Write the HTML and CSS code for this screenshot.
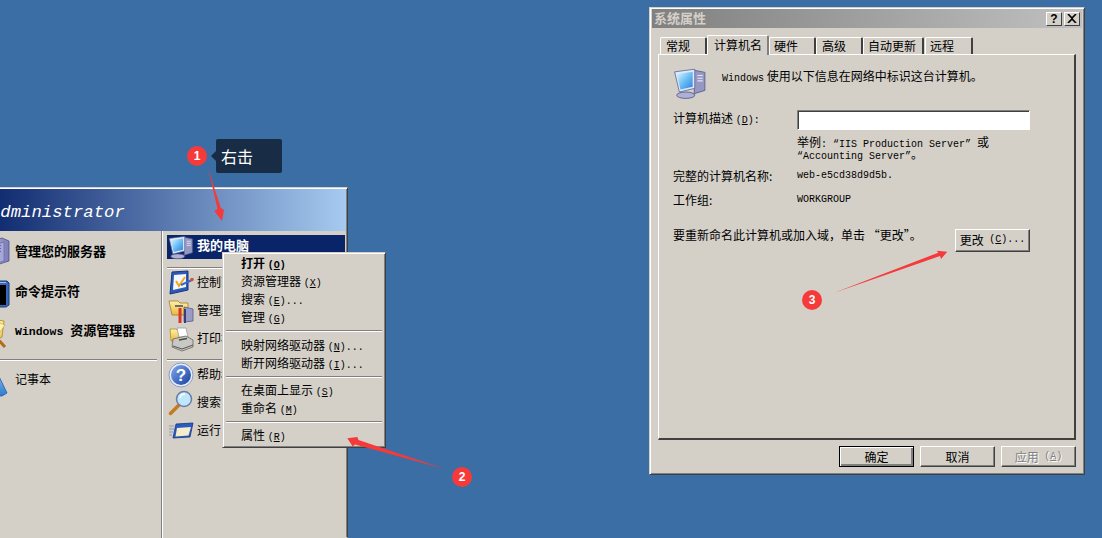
FILE: index.html
```html
<!DOCTYPE html>
<html lang="zh">
<head>
<meta charset="utf-8">
<title>系统属性</title>
<link rel="stylesheet" href="styles.css">
</head>
<body>
<svg class="defs" aria-hidden="true">
  <defs>
    <linearGradient id="scr" x1="0" y1="0" x2="1" y2="1"><stop offset="0" stop-color="#e6f6ff"/><stop offset=".5" stop-color="#6cc0f5"/><stop offset="1" stop-color="#2f7fdc"/></linearGradient>
    <linearGradient id="blue" x1="0" y1="0" x2="1" y2="1"><stop offset="0" stop-color="#7fa8ee"/><stop offset="1" stop-color="#173f9e"/></linearGradient>
    <linearGradient id="fold" x1="0" y1="0" x2="0" y2="1"><stop offset="0" stop-color="#fff2a8"/><stop offset="1" stop-color="#e8b83c"/></linearGradient>
    <linearGradient id="srv" x1="0" y1="0" x2="1" y2="0"><stop offset="0" stop-color="#c8c8e6"/><stop offset="1" stop-color="#7c7cb8"/></linearGradient>
    <linearGradient id="note" x1="0" y1="0" x2="0" y2="1"><stop offset="0" stop-color="#a4d0f4"/><stop offset="1" stop-color="#2e7ad0"/></linearGradient>
    <symbol id="i-pc" viewBox="0 0 32 32">
      <path d="M20 4 30 6V23L20 26Z" fill="#9698c4" stroke="#56588e" stroke-width=".8"/>
      <path d="M23 9h5M23 11.500h5M23 14h5" stroke="#e4e4f4" stroke-width="1"/>
      <ellipse cx="12" cy="27.500" rx="8.500" ry="3" fill="#b0b0d4" stroke="#55588c" stroke-width=".8"/>
      <path d="M1.500 5.500 20.500 3V21L6 24.500Z" fill="#e4e8f6" stroke="#5a6a9e" stroke-width=".8"/>
      <path d="M3.500 7.500 18.500 5.500V19.500L7 22Z" fill="url(#scr)"/>
    </symbol>
    <symbol id="i-ctl" viewBox="0 0 26 26">
      <path d="M4 2 20 1V20L2 24Z" fill="#2c5ab4" stroke="#16357e"/>
      <path d="M6 5 18 4V17L5 20Z" fill="#f4f6fc"/>
      <path d="M8 11 11 16 17 7" fill="none" stroke="#f0a818" stroke-width="2"/>
      <path d="M13 15 24 10" stroke="#3a68c8" stroke-width="2"/>
      <circle cx="24" cy="9.500" r="1.800" fill="#d84c3c"/>
    </symbol>
    <symbol id="i-tool" viewBox="0 0 26 26">
      <path d="M1 3H10L12 5H20V17H4Z" fill="url(#fold)" stroke="#a67c20" stroke-width=".8"/>
      <path d="M16 9 25 11V23L16 24Z" fill="#9a9cc8" stroke="#55588c" stroke-width=".8"/>
      <path d="M12 10V25" stroke="#d8352a" stroke-width="3"/>
      <path d="M7 8 H15" stroke="#6c6c6c" stroke-width="2"/>
      <path d="M17 11V25" stroke="#3c3c70" stroke-width="2"/>
    </symbol>
    <symbol id="i-prn" viewBox="0 0 26 26">
      <path d="M2 3H8L11 6V15H3Z" fill="url(#fold)" stroke="#b08a28" stroke-width=".8"/>
      <path d="M9 2H18L20 11H11Z" fill="#fff" stroke="#9a9ab0" stroke-width=".8"/>
      <path d="M5 13 18 10 25 14V21L14 25 4 21Z" fill="#c8c8c4" stroke="#66665e" stroke-width=".8"/>
      <path d="M5 20 14 23 25 19" fill="none" stroke="#55554e"/>
      <path d="M11 14 19 12.500" stroke="#4a4a44" stroke-width="1.500"/>
    </symbol>
    <symbol id="i-help" viewBox="0 0 26 26">
      <circle cx="13" cy="13" r="12" fill="#e9eefa" stroke="#8a9bc4"/>
      <circle cx="13" cy="13" r="10" fill="url(#blue)"/>
      <text x="13" y="19" class="help-q" text-anchor="middle">?</text>
    </symbol>
    <symbol id="i-find" viewBox="0 0 26 26">
      <path d="M2.500 23.500 10.500 15.500" stroke="#c47c1c" stroke-width="3.500" stroke-linecap="round"/>
      <circle cx="16" cy="9" r="7.500" fill="#bfe6fa" stroke="#6a7ca8" stroke-width="1.500"/>
      <path d="M12 8a5 5 0 0 1 5-4" fill="none" stroke="#fff" stroke-width="1.500"/>
    </symbol>
    <symbol id="i-run" viewBox="0 0 26 26">
      <path d="M8 6 25 5 22 19 5 20Z" fill="#2a5cc0" stroke="#16357e" stroke-width=".8"/>
      <path d="M9 10 23 9 20.500 17.500 7.500 18.500Z" fill="#f4eccc"/>
      <path d="M1 8H6M1 11H6M1 14H5M1 17H4" stroke="#8a98ba" stroke-width="1"/>
    </symbol>
    <symbol id="i-srv" viewBox="0 0 32 32">
      <path d="M3 7 24 1 31 4V24L9 31 3 28Z" fill="url(#srv)" stroke="#50508c" stroke-width=".8"/>
      <path d="M12 9 26 5V24L12 28Z" fill="#a8a8d8" stroke="#60609a" stroke-width=".6"/>
      <path d="M15 10.500 23 8.500M15 13.500 23 11.500M15 16.500 23 14.500" stroke="#5e5e9c"/>
      <circle cx="19" cy="22" r="1.500" fill="#dcdcf4"/>
    </symbol>
    <symbol id="i-cmd" viewBox="0 0 32 32">
      <path d="M2 4H29L31 6V28L28 30H2Z" fill="#3a68b8" stroke="#173a80"/>
      <rect x="3" y="8" width="25" height="20" fill="#000"/>
      <rect x="5" y="20" width="9" height="1.500" fill="#e8e8e8"/>
      <path d="M3 5.500H28" stroke="#9ac0f0"/>
    </symbol>
    <symbol id="i-exp" viewBox="0 0 32 32">
      <path d="M3 8 18 3 26 4 24 20 9 28Z" fill="url(#fold)" stroke="#a88420" stroke-width=".8"/>
      <path d="M7 16 22 6 27 8 17 22Z" fill="#fff3b0" stroke="#c09c30" stroke-width=".6"/>
      <path d="M18 20 27 30" stroke="#b46c18" stroke-width="3"/>
    </symbol>
    <symbol id="i-note" viewBox="0 0 32 32">
      <path d="M10 1 16 1 29 28 24 31 4 30 3 28Z" fill="url(#note)" stroke="#205ca8" stroke-width=".8"/>
      <path d="M12 5 18 20 8 25Z" fill="#c6e2fa"/>
    </symbol>
  </defs>
</svg>

<section class="startmenu">
  <header class="start-head">Administrator</header>
  <div class="start-body">
    <div class="start-left">
      <div class="left-row strong"><svg class="ico-l"><use href="#i-srv"/></svg><span class="row-text">管理您的服务器</span></div>
      <div class="left-row strong"><svg class="ico-l"><use href="#i-cmd"/></svg><span class="row-text">命令提示符</span></div>
      <div class="left-row strong"><svg class="ico-l"><use href="#i-exp"/></svg><span class="row-text"><span class="lat-b">Windows</span> 资源管理器</span></div>
      <div class="sep sep-left"></div>
      <div class="left-row"><svg class="ico-l"><use href="#i-note"/></svg><span class="row-text">记事本</span></div>
    </div>
    <div class="start-right">
      <div class="right-sel"><svg class="ico-r"><use href="#i-pc"/></svg><span class="row-text">我的电脑</span></div>
      <div class="sep sep-r1"></div>
      <div class="right-row"><svg class="ico-r"><use href="#i-ctl"/></svg><span class="row-text">控制面板</span></div>
      <div class="right-row"><svg class="ico-r"><use href="#i-tool"/></svg><span class="row-text">管理工具</span></div>
      <div class="right-row"><svg class="ico-r"><use href="#i-prn"/></svg><span class="row-text">打印机</span></div>
      <div class="sep sep-r2"></div>
      <div class="right-row"><svg class="ico-r"><use href="#i-help"/></svg><span class="row-text">帮助和支持</span></div>
      <div class="right-row"><svg class="ico-r"><use href="#i-find"/></svg><span class="row-text">搜索</span></div>
      <div class="right-row"><svg class="ico-r"><use href="#i-run"/></svg><span class="row-text">运行</span></div>
    </div>
  </div>
</section>

<nav class="ctxmenu">
  <div class="ctx-item ctx-default">打开 <span class="lat">(<u>O</u>)</span></div>
  <div class="ctx-item">资源管理器 <span class="lat">(<u>X</u>)</span></div>
  <div class="ctx-item">搜索 <span class="lat">(<u>E</u>)...</span></div>
  <div class="ctx-item">管理 <span class="lat">(<u>G</u>)</span></div>
  <div class="sep ctx-sep ctx-sep-first"></div>
  <div class="ctx-item">映射网络驱动器 <span class="lat">(<u>N</u>)...</span></div>
  <div class="ctx-item">断开网络驱动器 <span class="lat">(<u>I</u>)...</span></div>
  <div class="sep ctx-sep"></div>
  <div class="ctx-item">在桌面上显示 <span class="lat">(<u>S</u>)</span></div>
  <div class="ctx-item">重命名 <span class="lat">(<u>M</u>)</span></div>
  <div class="sep ctx-sep"></div>
  <div class="ctx-item">属性 <span class="lat">(<u>R</u>)</span></div>
</nav>

<section class="dialog">
  <div class="titlebar">
    <span class="title-text">系统属性</span>
    <span class="title-btns">
      <span class="tbtn tbtn-help">?</span>
      <span class="tbtn"><svg class="tbtn-x" viewBox="0 0 10 9"><path d="M1 0 5 4 9 0M1 9 5 5 9 9" fill="none" stroke="#000" stroke-width="1.600"/></svg></span>
    </span>
  </div>
  <div class="tabs">
    <span class="tab tab-1">常规</span>
    <span class="tab tab-active">计算机名</span>
    <span class="tab tab-2">硬件</span>
    <span class="tab tab-3">高级</span>
    <span class="tab tab-4">自动更新</span>
    <span class="tab tab-5">远程</span>
  </div>
  <div class="panel">
    <div class="intro">
      <svg class="ico-big"><use href="#i-pc"/></svg>
      <span class="intro-text"><span class="lat">Windows</span> 使用以下信息在网络中标识这台计算机。</span>
    </div>
    <div class="form">
      <span class="f-label f-first">计算机描述 <span class="lat">(<u>D</u>):</span></span>
      <span class="f-input"></span>
      <span class="f-hint">
        <span class="hint-line">举例<span class="lat">: “IIS Production Server” </span>或</span>
        <span class="hint-line"><span class="lat">“Accounting Server”</span>。</span>
      </span>
      <span class="f-label">完整的计算机名称:</span>
      <span class="lat">web-e5cd38d9d5b.</span>
      <span class="f-label">工作组:</span>
      <span class="lat">WORKGROUP</span>
    </div>
    <div class="rename">
      <span class="rename-text">要重新命名此计算机或加入域，单击 “更改”。</span>
      <span class="btn btn-change">更改 <span class="lat">(<u>C</u>)...</span></span>
    </div>
  </div>
  <div class="actions">
    <span class="btn btn-default">确定</span>
    <span class="btn">取消</span>
    <span class="btn btn-off">应用 <span class="lat">(<u>A</u>)</span></span>
  </div>
</section>

<svg class="marks" viewBox="0 0 1102 538" aria-hidden="true">
  <path d="M208 168 220.800 208 224 210 222 221 214.300 211 217.500 209Z" fill="#f43a3a"/>
  <path d="M445 469 355 444.500 352.700 446.500 347.300 438.300 357.300 437 358.500 440Z" fill="#f43a3a"/>
  <path d="M834.300 292.700 938.300 252.700 936.700 250.700 947.300 251.700 941 259 940 256Z" fill="#f43a3a"/>
  <circle cx="197" cy="156" r="10" fill="#f63a3a"/>
  <circle cx="462" cy="477" r="10" fill="#f63a3a"/>
  <circle cx="812" cy="300" r="10" fill="#f63a3a"/>
</svg>
<span class="num num-1">1</span>
<span class="num num-2">2</span>
<span class="num num-3">3</span>
<div class="tip">右击</div>
</body>
</html>
```
FILE: styles.css
```css
* { box-sizing: border-box; }
html, body { margin: 0; height: 538px; overflow: hidden; }
body {
  position: relative;
  background: #3b6ea5;
  font: 12px/18px "Noto Sans CJK SC", sans-serif;
  color: #000;
}
.defs { position: absolute; width: 0; height: 0; }
.lat { font-family: "Liberation Mono", monospace; font-size: 10px; }
.lat-b { font-family: "Liberation Mono", monospace; font-size: 11.500px; font-weight: 700; margin-right: 4px; }
.help-q { font: 700 17px "Liberation Sans", sans-serif; fill: #fff; }

.sep { height: 2px; background: #808080; border-bottom: 1px solid #fff; }

/* start menu */
.startmenu {
  position: absolute; left: -20px; top: 187px; width: 368px; height: 351px;
  background: #d4d0c8;
  border: 1px solid #d4d0c8; border-right-color: #404040;
  box-shadow: inset 0 1px #fff, inset -1px 0 #808080;
  padding: 1px 1px 0 0;
}
.start-head {
  height: 42px; padding: 12px 0 0 9px;
  background: linear-gradient(90deg, #0a246a, #a6caf0);
  color: #fff;
  font: italic 17.300px/24px "Liberation Mono", monospace;
}
.start-body { display: flex; height: 308px; }
.start-left {
  width: 182px; padding-top: 2px;
  box-shadow: inset -1px 0 #fff, inset -2px 0 #808080;
}
.left-row { display: flex; align-items: center; height: 40px; gap: 5px; white-space: nowrap; }
.row-text { margin-bottom: 2px; }
.left-row .row-text { margin-bottom: 4px; }
.strong { font-size: 13px; font-weight: 700; }
.ico-l { width: 32px; height: 32px; flex: none; margin-left: -3px; }
.sep-left { margin: 6px 6px 0 0; }
.start-right { flex: 1; padding: 4px 1px 0 4px; min-width: 0; }
.right-sel {
  display: flex; align-items: center; gap: 3px; height: 24px; padding-left: 1px;
  background: #0a246a; color: #fff; font-size: 13px; font-weight: 700;
}
.right-sel .row-text { margin-bottom: 4px; }
.right-row { display: flex; align-items: center; gap: 3px; height: 28px; padding-left: 1px; white-space: nowrap; }
.ico-r { width: 26px; height: 26px; flex: none; }
.sep-r1 { margin-top: 8px; }
.sep-r2 { margin-top: 6px; }

/* context menu */
.ctxmenu {
  position: absolute; left: 222px; top: 252px; width: 164px; height: 196px;
  padding: 1px 3px;
  background: #d4d0c8;
  border: 1px solid #d4d0c8; border-right-color: #404040; border-bottom-color: #404040;
  box-shadow: inset 1px 1px #fff, inset -1px -1px #808080;
}
.ctx-item { height: 18px; padding-left: 15px; white-space: nowrap; }
.ctx-default { font-weight: 700; }
.ctx-sep { margin: 4px 0 3px; }
.ctx-sep-first { margin-bottom: 4px; }

/* dialog */
.dialog {
  position: absolute; left: 649px; top: 7px; width: 436px; height: 468px;
  padding: 1px 2px;
  background: #d4d0c8;
  border: 1px solid #d4d0c8; border-right-color: #404040; border-bottom-color: #404040;
  box-shadow: inset 1px 1px #fff, inset -1px -1px #808080;
  display: flex; flex-direction: column;
}
.titlebar {
  display: flex; align-items: center; justify-content: space-between;
  height: 19px; padding: 0 2px 2px 2px; flex: none;
  background: linear-gradient(90deg, #808080, #c0c0c0);
}
.title-text { color: #d4d0c8; font-size: 13px; font-weight: 700; }
.title-btns { display: flex; gap: 2px; margin-top: 2px; }
.tbtn {
  display: flex; align-items: center; justify-content: center;
  width: 16px; height: 14px;
  background: #d4d0c8;
  border: 1px solid #fff; border-right-color: #404040; border-bottom-color: #404040;
  font: 700 12px/1 "Liberation Sans", sans-serif;
}
.tbtn-x { width: 10px; height: 9px; }
.tabs { display: flex; align-items: flex-end; height: 20px; margin: 7px 0 0 8px; flex: none; position: relative; z-index: 1; }
.tab {
  height: 17px; margin-bottom: 1px; padding: 0 0 0 5px; line-height: 16px;
  background: #d4d0c8;
  border: 1px solid #fff; border-bottom: 0; border-right: 2px solid #404040;
  border-radius: 2px 2px 0 0;
}
.tab-1 { width: 47px; }
.tab-active { width: 62px; height: 20px; margin-bottom: 0; padding-left: 6px; line-height: 18px; border-right-color: #808080; }
.tab-2 { width: 47px; padding-left: 4px; }
.tab-3 { width: 47px; }
.tab-4 { width: 61px; padding-left: 4px; }
.tab-5 { width: 48px; margin-left: 1px; padding-left: 4px; }
.panel {
  flex: none; height: 386px; width: 418px; margin: -1px 0 0 6px; padding: 0 0 0 14px;
  background: #d4d0c8;
  border: 1px solid #fff; border-right: 2px solid #404040; border-bottom: 2px solid #404040;
}
.intro { display: flex; align-items: flex-start; gap: 15px; height: 34px; margin-top: 11px; }
.intro-text { margin-top: 1px; }
.ico-big { width: 34px; height: 34px; flex: none; }
.form {
  display: grid; grid-template-columns: 124px 233px;
  grid-template-rows: 20px 34px 24px 24px;
  align-items: center; margin-top: 10px;
}
.f-first { margin-bottom: 2px; }
.f-input {
  height: 20px; background: #fff;
  border: 1px solid #808080; border-right-color: #fff; border-bottom-color: #fff;
  box-shadow: inset 1px 1px #404040;
}
.f-hint { grid-column: 2; white-space: nowrap; align-self: start; margin-top: 6px; }
.hint-line { display: block; height: 12px; line-height: 12px; }
.rename { display: flex; justify-content: space-between; width: 357px; height: 23px; margin-top: 17px; }
.rename-text { line-height: 11px; }
.btn {
  display: flex; align-items: center; justify-content: center; gap: 3px;
  width: 75px; height: 21px; white-space: pre;
  background: #d4d0c8;
  border: 1px solid #fff; border-right-color: #404040; border-bottom-color: #404040;
  box-shadow: inset -1px -1px #808080;
}
.btn-change { height: 23px; padding-bottom: 2px; }
.btn-default { border-color: #000; box-shadow: inset 1px 1px #fff, inset -2px -2px #808080; }
.btn-off { color: #808080; text-shadow: 1px 1px #fff; }
.actions { display: flex; justify-content: flex-end; gap: 6px; margin-top: 6px; padding-right: 6px; }

/* annotations */
.marks { position: absolute; left: 0; top: 0; width: 1102px; height: 538px; }
.num {
  position: absolute; width: 20px; text-align: center; color: #fff;
  font: 700 12px/20px "Liberation Sans", sans-serif;
}
.num-1 { left: 187px; top: 146px; }
.num-2 { left: 452px; top: 467px; }
.num-3 { left: 802px; top: 290px; }
.tip {
  position: absolute; left: 216px; top: 139px; width: 66px; height: 34px;
  padding-left: 5px;
  background: #182c45; color: #fff; border-radius: 2px;
  font-size: 16px; line-height: 34px;
}
.tip::before {
  content: ""; position: absolute; left: -5px; top: 12px;
  border: 5px solid transparent; border-left: 0; border-right-color: #182c45;
}
```
